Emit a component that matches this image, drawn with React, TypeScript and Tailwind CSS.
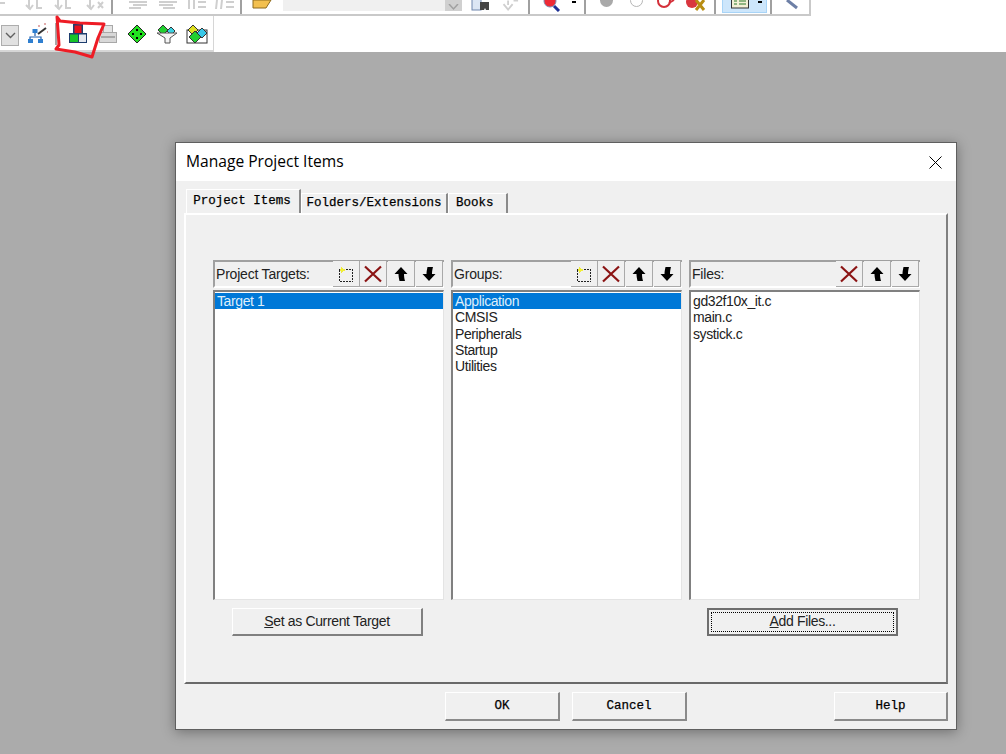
const sans = "font-['Liberation_Sans',Arial,sans-serif]"
const mono = "font-['Liberation_Mono','Courier_New',monospace] [-webkit-text-stroke:0.25px_#000]"

const Sep = ({ h = 14 }: { h?: number }) => (
    <div className="w-[2px] shrink-0 bg-[#a0a0a0]" style={{ height: h }}></div>
)

// top toolbar glyphs are cut off by the window edge, only the lower part shows
const Faded = ({ w, d }: { w: number; d: string }) => (
    <div className="flex shrink-0 justify-center" style={{ width: w }}>
        <svg width="22" height="12" viewBox="0 0 22 12" fill="none" stroke="#cfcfcf" strokeWidth="2">
            <path d={d} />
        </svg>
    </div>
)

const TopToolbar = () => (
    <div className="flex h-[16px] w-[811px] items-start overflow-hidden border-r-2 border-b-2 border-[#c9c9c9] bg-white">
        <Faded w={22} d="M0 3h5" />
        <Faded w={26} d="M5 0v9M2 5l4 4 3-4M13 0v8h5" />
        <Faded w={32} d="M5 0v9M2 5l4 4 3-4M13 0v8h5" />
        <Faded w={31} d="M5 0v9M2 5l4 4 3-4M13 2l5 6M18 2l-5 6" />
        <Sep />
        <div className="w-[10px]"></div>
        <Faded w={30} d="M2 2h18M6 5h14M2 8h12" />
        <Faded w={30} d="M2 2h18M2 5h14M6 8h12" />
        <Faded w={28} d="M3 0v9M8 0v9M12 2h8M12 7h8" />
        <Faded w={29} d="M3 0l-1 9M8 0l-1 9M12 2h8M12 7h8" />
        <Sep />
        <div className="flex w-[41px] justify-center">
            <svg width="22" height="10" viewBox="0 0 22 10">
                <path d="M2 0v8h13l5-8z" fill="#f3c04f" stroke="#8d6b1f" />
            </svg>
        </div>
        <div className="flex h-[11px] w-[179px] justify-end bg-[#f0f0f0]">
            <div className="flex h-[11px] w-[17px] items-end justify-center bg-[#d0d0d0]">
                <svg width="11" height="7" viewBox="0 0 11 7" fill="none" stroke="#a0a0a0" strokeWidth="1.5"><path d="M1 0l4.5 5L10 0" /></svg>
            </div>
        </div>
        <div className="flex w-[38px] justify-center">
            <svg width="20" height="12" viewBox="0 0 20 12">
                <rect x="1" y="-2" width="9" height="12" fill="#dce6f4" stroke="#6f86ad" />
                <path d="M9 2h9v8h-3l-1-2-1 2H9z" fill="#444" />
            </svg>
        </div>
        <Faded w={20} d="M10 0v5M5 4l5 6 5-6M16 0h5" />
        <div className="w-[9px]"></div>
        <Sep />
        <div className="flex w-[42px] justify-center">
            <svg width="20" height="12" viewBox="0 0 20 12">
                <circle cx="9" cy="1" r="6" fill="#ee2a35" stroke="#7d8db0" />
                <path d="M13 6l5 5" stroke="#1d2f94" strokeWidth="3" />
            </svg>
        </div>
        <div className="h-[4px] w-[12px]">
            <div className="mt-[1px] h-[2px] w-[4px] bg-black"></div>
        </div>
        <Sep />
        <div className="flex w-[40px] justify-center">
            <div className="-mt-[6px] size-[13px] rounded-full bg-[#a9a9a9]"></div>
        </div>
        <div className="flex w-[20px] justify-center">
            <div className="-mt-[6px] size-[13px] rounded-full border border-[#b5b5b5] bg-white"></div>
        </div>
        <div className="flex w-[40px] justify-center">
            <svg width="20" height="12" viewBox="0 0 20 12">
                <circle cx="8" cy="1" r="6" fill="#fff" stroke="#d4303a" strokeWidth="2" />
                <path d="M13 3l5-3" stroke="#d4303a" strokeWidth="2" />
            </svg>
        </div>
        <div className="flex w-[20px] justify-center">
            <svg width="20" height="12" viewBox="0 0 20 12">
                <circle cx="6" cy="2" r="6" fill="#d9363e" />
                <path d="M10 0l8 10M18 0l-8 10" stroke="#b88d12" strokeWidth="3" />
            </svg>
        </div>
        <div className="w-[8px]"></div>
        <Sep />
        <div className="ml-[6px] flex h-[13px] w-[45px] items-start gap-[5px] border-x border-b border-[#a8d4f7] bg-[#cde6fb] pl-[8px]">
            <svg width="18" height="9" viewBox="0 0 18 9">
                <rect x="0.5" y="-3" width="17" height="11" fill="#f3f0d6" stroke="#333" />
                <path d="M3 1h3M3 4h3M8 1h7M8 4h7" stroke="#2c7a2c" />
            </svg>
            <div className="mt-[1px] ml-[4px] h-[2px] w-[4px] bg-black"></div>
        </div>
        <div className="ml-[3px]"><Sep /></div>
        <div className="flex w-[37px] justify-center">
            <svg width="20" height="10" viewBox="0 0 20 10" fill="none" stroke="#6d7fa6" strokeWidth="3"><path d="M6 0l10 8" /></svg>
        </div>
    </div>
)

const BuildToolbar = () => (
    <div className="flex h-[36px] w-full bg-white">
        <div className="flex h-[36px] w-[214px] shrink-0 items-center border-r border-b-2 border-[#d6d6d6] pt-[2px] pl-[1px]">
            <div className="mt-[2px] flex h-[21px] w-[18px] items-center justify-center border border-[#adadad] bg-[#e1e1e1]">
                <svg width="11" height="7" viewBox="0 0 11 7" fill="none" stroke="#606060" strokeWidth="1.4"><path d="M1 1l4.5 4.5L10 1" /></svg>
            </div>
            <div className="ml-[8px] mr-[6px]">
                <svg width="22" height="22" viewBox="0 0 22 22">
                    <path d="M8 9v4M3 17v-3h11v3" fill="none" stroke="#1e5fae" strokeWidth="1.2" />
                    <rect x="5.5" y="6" width="5" height="4" fill="#2f7fd0" />
                    <rect x="1" y="16" width="5" height="4" fill="#2f7fd0" />
                    <rect x="11" y="16" width="5" height="4" fill="#2f7fd0" />
                    <path d="M11 11L19 5" stroke="#333" strokeWidth="2" />
                    <path d="M11 3h2M17 1h2M20 9h1" stroke="#d89090" strokeWidth="1.5" />
                </svg>
            </div>
            <div className="h-[22px] w-[2px] bg-[#a8a8a8]"></div>
            <div className="ml-[11px]">
                <svg width="20" height="20" viewBox="0 0 20 20">
                    <rect x="5" y="0" width="10" height="9" fill="#1d3d6e" />
                    <rect x="6.500" y="1.500" width="7" height="7.500" fill="#e8101c" />
                    <rect x="1" y="9" width="18" height="10" fill="#1d3d6e" />
                    <rect x="2" y="10.500" width="8" height="7.500" fill="#17c42a" />
                    <rect x="11" y="10.500" width="7" height="7.500" fill="#e4e8ef" />
                </svg>
            </div>
            <div className="ml-[10px]">
                <svg width="20" height="20" viewBox="0 0 20 20">
                    <rect x="5.5" y="1.5" width="9" height="7" fill="#e4e4e4" stroke="#a8a8a8" />
                    <rect x="1.5" y="8.5" width="17" height="10" fill="#d8d8d8" stroke="#a8a8a8" />
                    <path d="M3 13h14" stroke="#a8a8a8" strokeWidth="2" />
                </svg>
            </div>
            <div className="ml-[9px]">
                <svg width="20" height="20" viewBox="0 0 20 20">
                    <path d="M10 1l9 9-9 9-9-9z" fill="#22e020" stroke="#222" />
                    <path d="M9 5h2v2H9zM5 9h2v2H5zM13 9h2v2h-2zM9 13h2v2H9z" fill="#000" />
                </svg>
            </div>
            <div className="ml-[9px]">
                <svg width="22" height="20" viewBox="0 0 22 20">
                    <path d="M7 1l5 5-5 5-5-5z" fill="#22d030" stroke="#333" />
                    <path d="M15 3l4 4-4 4-4-4z" fill="#38d0e0" stroke="#333" />
                    <path d="M1 9h20l-7 5v5H9v-5z" fill="#f4f4f4" stroke="#555" />
                </svg>
            </div>
            <div className="ml-[8px]">
                <svg width="22" height="20" viewBox="0 0 22 20">
                    <rect x="1" y="6" width="20" height="13" fill="#fff" stroke="#333" />
                    <path d="M7 1l5 5-5 5-5-5z" fill="#e0e020" stroke="#333" />
                    <path d="M16 4l5 5-5 5-5-5z" fill="#38c8e8" stroke="#333" />
                    <path d="M9 7l6 6-6 6-6-6z" fill="#22d030" stroke="#333" />
                </svg>
            </div>
        </div>
    </div>
)

const NewIcon = () => (
    <svg width="18" height="18" viewBox="0 0 18 18" shapeRendering="crispEdges">
        <rect x="2.5" y="4.5" width="13" height="12" fill="none" stroke="#222" strokeDasharray="2 1" />
        <path d="M5 1l1 3 3 1-3 1-1 3-1-3-3-1 3-1z" fill="#f1ee3a" />
    </svg>
)
const DeleteIcon = () => (
    <svg width="18" height="18" viewBox="0 0 18 18" fill="none" stroke="#8b1414" strokeWidth="2.2">
        <path d="M1 1.5l16 15M17 1.5l-16 15" />
    </svg>
)
const UpIcon = () => (
    <svg width="16" height="16" viewBox="0 0 16 16">
        <path d="M8 1l6.500 7H11c0 3 .5 5 1 7H6.500C6 13 5.500 10 5.500 8H1.500z" fill="#000" />
    </svg>
)
const DownIcon = () => (
    <svg width="16" height="16" viewBox="0 0 16 16">
        <path d="M8 15l6.500-7H11C11 5 11.500 3 12 1H6.500C6 3 5.500 6 5.500 8H1.500z" fill="#000" />
    </svg>
)

const ToolBtn = ({ children }: { children: React.ReactNode }) => (
    <div className="flex h-[26px] w-[27px] items-center justify-center border-r border-b border-[#a9a9a9] bg-[#f0f0f0]">{children}</div>
)

type ColumnProps = {
    title: string
    withNew?: boolean
    items: string[]
    selected?: number
}

const Column = ({ title, withNew, items, selected }: ColumnProps) => (
    <div className="flex w-[231px] shrink-0 flex-col">
        <div className="flex h-[28px] items-center justify-between border-t-2 border-l-2 border-[#a0a0a0] border-b-2 border-b-white bg-[#f0f0f0] pl-[1px]">
            <span className={`${sans} text-[14px] tracking-[-0.2px] text-[#222]`}>{title}</span>
            <div className="flex items-center pr-[1px]">
                {withNew && <ToolBtn><NewIcon /></ToolBtn>}
                <ToolBtn><DeleteIcon /></ToolBtn>
                <div className="ml-[1px]"><ToolBtn><UpIcon /></ToolBtn></div>
                <div className="ml-[1px]"><ToolBtn><DownIcon /></ToolBtn></div>
            </div>
        </div>
        <div className={`${sans} mt-[2px] h-[310px] border-t-2 border-l-2 border-[#808080] border-r border-b border-r-[#e4e4e4] border-b-[#e4e4e4] bg-white pt-[1px] text-[14px] tracking-[-0.4px] text-[#222]`}>
            {items.map((item, i) => (
                <div key={item} className={`h-[16.3px] pl-[2px] leading-[16px] ${i === selected ? "bg-[#0078d7] text-[#dfeefa]" : ""}`}>{item}</div>
            ))}
        </div>
    </div>
)

const FooterBtn = ({ label, className }: { label: string; className: string }) => (
    <button className={`${mono} flex h-[29px] shrink-0 items-center justify-center border-t border-l border-t-white border-l-white border-r-2 border-b-2 border-r-[#8a8a8a] border-b-[#8a8a8a] bg-[#f0f0f0] text-[12.500px] text-black ${className}`}>{label}</button>
)

const App = () => {
    return (
        <div className="relative flex h-[754px] w-[1006px] flex-col overflow-hidden bg-[#ababab]">
            <div className="bg-white">
                <TopToolbar />
                <BuildToolbar />
            </div>

            {/* red marker drawn over the toolbar */}
            <svg className="absolute top-0 left-0" width="120" height="62" fill="none" stroke="#ee1c25" strokeWidth="3" strokeLinejoin="round" strokeLinecap="round">
                <path d="M57 17L60 21L80 23L104 24L98 38L92 57L75 52L56 49L59 45L58 30L57 17" />
            </svg>

            <div className="ml-[175px] mt-[90px] flex h-[588px] w-[782px] flex-col border border-[#5f5f5f] bg-[#f0f0f0] shadow-[0_2px_12px_rgba(0,0,0,0.35)]">
                <div className="flex h-[38px] shrink-0 items-center justify-between bg-white pr-[14px] pl-[10px]">
                    <span className="font-['Open_Sans',sans-serif] text-[15.6px] text-black">Manage Project Items</span>
                    <svg width="13" height="13" viewBox="0 0 13 13" stroke="#000" strokeWidth="1"><path d="M.5.5l12 12M12.500.5l-12 12" /></svg>
                </div>

                <div className="flex-1 px-[8px] pt-[9px]">
                    <div className={`${mono} relative z-10 ml-[2px] flex h-[23px] items-end text-[12.500px] text-black`}>
                        <div className="flex h-[24px] w-[115px] items-center justify-center border-t border-l border-white border-r-2 border-r-[#8a8a8a] bg-[#f0f0f0] pr-[2px]">Project Items</div>
                        <div className="flex h-[20px] w-[147px] items-center justify-center border-t border-l border-white border-r-2 border-r-[#8a8a8a]">Folders/Extensions</div>
                        <div className="flex h-[20px] w-[60px] items-center border-t border-l border-white border-r-2 border-r-[#8a8a8a] pl-[7px]">Books</div>
                    </div>

                    {/* tab page */}
                    <div className="flex h-[471px] w-[764px] flex-col border-t-2 border-l-2 border-white border-r-2 border-b-2 border-r-[#808080] border-b-[#696969] pt-[45px] pr-[20px] pl-[27px]">
                        <div className="flex gap-[7px]">
                            <Column title="Project Targets:" withNew items={["Target 1"]} selected={0} />
                            <Column title="Groups:" withNew items={["Application", "CMSIS", "Peripherals", "Startup", "Utilities"]} selected={0} />
                            <Column title="Files:" items={["gd32f10x_it.c", "main.c", "systick.c"]} />
                        </div>
                        <div className={`${sans} mt-[8px] flex text-[14px] tracking-[-0.35px] text-[#222]`}>
                            <button className="ml-[19px] flex h-[28px] w-[191px] items-center justify-center border-t border-l border-white border-r-2 border-b-2 border-r-[#808080] border-b-[#808080]">
                                <span><span className="underline">S</span>et as Current Target</span>
                            </button>
                            <button className="ml-[284px] flex h-[28px] w-[191px] items-center justify-center border-2 border-[#6e6e6e] p-[2px]">
                                <span className="flex size-full items-center justify-center border border-dotted border-black pb-[1px]">
                                    <span><span className="underline">A</span>dd Files...</span>
                                </span>
                            </button>
                        </div>
                    </div>

                    <div className="mt-[8px] flex">
                        <FooterBtn label="OK" className="ml-[261px] w-[115px]" />
                        <FooterBtn label="Cancel" className="ml-[12px] w-[115px]" />
                        <FooterBtn label="Help" className="ml-[147px] w-[114px]" />
                    </div>
                </div>
            </div>
        </div>
    )
}

export default App
